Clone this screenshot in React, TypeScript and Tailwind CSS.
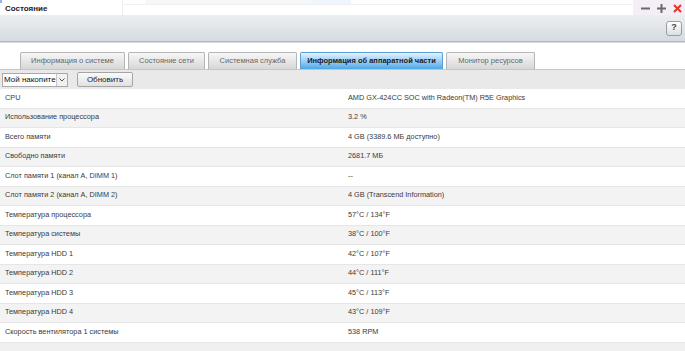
import React from 'react';

const tabs = [
  { label: 'Информация о системе', w: 'w-[105px]' },
  { label: 'Состояние сети', w: 'w-[77px]' },
  { label: 'Системная служба', w: 'w-[89px]' },
  { label: 'Информация об аппаратной части', w: 'w-[143px]', active: true },
  { label: 'Монитор ресурсов', w: 'w-[89px]' },
];

const rows: [string, string][] = [
  ['CPU', 'AMD GX-424CC SOC with Radeon(TM) R5E Graphics'],
  ['Использование процессора', '3.2 %'],
  ['Всего памяти', '4 GB (3389.6 МБ доступно)'],
  ['Свободно памяти', '2681.7 МБ'],
  ['Слот памяти 1 (канал A, DIMM 1)', '--'],
  ['Слот памяти 2 (канал A, DIMM 2)', '4 GB (Transcend Information)'],
  ['Температура процессора', '57°C / 134°F'],
  ['Температура системы', '38°C / 100°F'],
  ['Температура HDD 1', '42°C / 107°F'],
  ['Температура HDD 2', '44°C / 111°F'],
  ['Температура HDD 3', '45°C / 113°F'],
  ['Температура HDD 4', '43°C / 109°F'],
  ['Скорость вентилятора 1 системы', '538 RPM'],
];

function App() {
  return (
    <div className="w-[685px] h-[351px] overflow-hidden bg-white flex flex-col text-[#333] font-['Liberation_Sans',Arial,sans-serif]">
      {/* window title strip */}
      <div className="h-[15px] flex shrink-0">
        <div className="w-[123px] border-r border-[#eceef1] flex flex-col">
          <div className="h-[3px] flex">
            <div className="w-[2px] bg-[#8fb8e6]" />
          </div>
          <div className="pl-[5px] text-[8px] font-bold text-[#222] leading-[11px]">Состояние</div>
        </div>
        <div className="flex-1 flex flex-col">
          <div className="h-[5px] flex border-b border-[#eef0f3]">
            <div className="w-[22px]" />
            <div className="w-[166px] bg-[#f6f7f9]" />
            <div className="w-[40px] bg-[#eef5fd]" />
          </div>
        </div>
        <div className="w-[52px] bg-[#f4eff6] flex items-center justify-end gap-[7px] pr-[3px] pt-[1px]">
          <svg width="9" height="9" viewBox="0 0 9 9">
            <rect x="0" y="3.5" width="9" height="2" fill="#6a6a6a" />
          </svg>
          <svg width="9" height="9" viewBox="0 0 9 9">
            <rect x="0" y="3.5" width="9" height="2" fill="#6a6a6a" />
            <rect x="3.5" y="0" width="2" height="9" fill="#6a6a6a" />
          </svg>
          <svg width="9" height="9" viewBox="0 0 9 9">
            <path d="M1 1L8 8M8 1L1 8" stroke="#e8322a" strokeWidth="2" />
          </svg>
        </div>
      </div>

      {/* toolbar */}
      <div className="h-[26px] shrink-0 bg-gradient-to-b from-[#eceef1] to-[#d6dbe1] flex items-center justify-end pr-[3px]">
        <div className="w-[16px] h-[15px] rounded-[3px] border border-[#9a9ea4] bg-gradient-to-b from-[#ffffff] to-[#dcdfe3] flex items-center justify-center text-[9px] font-bold text-[#444]">
          ?
        </div>
      </div>
      <div className="h-[1px] bg-[#b4b8bd] shrink-0" />
      <div className="h-[1px] bg-[#d5d8dc] shrink-0" />

      {/* tabs */}
      <div className="h-[10px] shrink-0" />
      <div className="h-[17px] shrink-0 flex items-end gap-[3px] pl-[20px] border-b border-[#c6c6c6]">
        {tabs.map((t) =>
          t.active ? (
            <div
              key={t.label}
              className={`${t.w} h-[17px] rounded-t-[2px] border border-[#5a9fd6] border-b-0 bg-gradient-to-b from-[#e3f2fd] to-[#4aa8ea] flex items-center justify-center text-[7.5px] font-bold text-[#1a1a1a]`}
            >
              {t.label}
            </div>
          ) : (
            <div
              key={t.label}
              className={`${t.w} h-[17px] rounded-t-[2px] border border-[#b5b5b5] border-b-0 bg-gradient-to-b from-[#f7f7f7] to-[#d7d7d7] flex items-center justify-center text-[7.5px] text-[#666]`}
            >
              {t.label}
            </div>
          )
        )}
      </div>

      {/* sub toolbar */}
      <div className="h-[19px] shrink-0 bg-[#e9e9e9] flex items-center pl-[2px] gap-[9px]">
        <div className="w-[66px] h-[14px] bg-white border border-[#a9a9a9] flex items-center">
          <div className="w-[54px] overflow-hidden whitespace-nowrap text-[8px] text-[#111] pl-[1px] leading-[12px]">Мой накопите</div>
          <div className="w-[11px] h-full border-l border-[#c8c8c8] bg-[#f1f1f1] flex items-center justify-center">
            <svg width="6" height="4" viewBox="0 0 6 4">
              <path d="M0.5 0.5L3 3L5.5 0.5" stroke="#555" fill="none" strokeWidth="1" />
            </svg>
          </div>
        </div>
        <div className="w-[56px] h-[15px] border border-[#a5a5a5] rounded-[2px] bg-gradient-to-b from-[#fafafa] to-[#e1e1e1] flex items-center justify-center text-[8px] text-[#222]">
          Обновить
        </div>
      </div>

      {/* rows */}
      <div className="flex flex-col shrink-0">
        {rows.map(([k, v], i) => (
          <div
            key={k}
            className={`h-[19.5px] flex items-center border-b border-[#e6e6e6] text-[7.3px] text-[#3a3a3a] ${
              i % 2 === 1 ? 'bg-[#f3f3f3]' : 'bg-white'
            }`}
          >
            <div className="w-[348px] pl-[5px]">{k}</div>
            <div>{v}</div>
          </div>
        ))}
      </div>
      <div className="flex-1 bg-[#f0f0f2]" />
    </div>
  );
}

export default App;
